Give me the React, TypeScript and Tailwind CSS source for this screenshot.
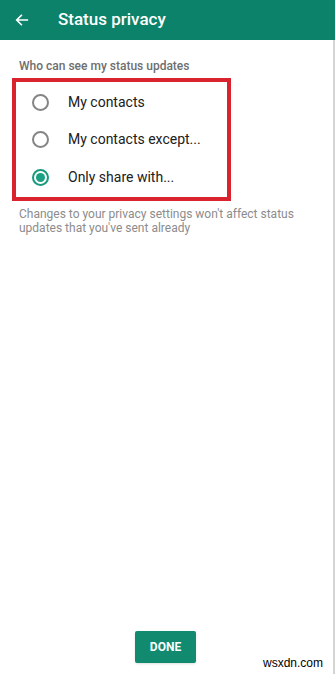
import React from "react";

const options = ["My contacts", "My contacts except...", "Only share with..."];

const Radio = ({ checked }: { checked: boolean }) => (
    <span
        className={`flex items-center justify-center w-[17px] h-[17px] rounded-full border-2 ${checked ? "border-[#179a7e]" : "border-[#858585]"}`}
    >
        {checked && <span className="w-[9px] h-[9px] rounded-full bg-[#1aa082]" />}
    </span>
);

export default function App() {
    return (
        <div className="flex flex-col w-[335px] h-[674px] bg-white font-['Roboto',sans-serif]">
            <div className="flex items-center h-[40px] bg-[#0b8269] shrink-0">
                <svg className="ml-[14px]" width="16" height="16" viewBox="0 0 24 24" fill="none" stroke="white" strokeWidth="2.4" strokeLinecap="square">
                    <path d="M20 12H5M11 5l-7 7 7 7" />
                </svg>
                <span className="ml-[28px] text-white text-[17px] font-medium">Status privacy</span>
            </div>
            <div className="relative flex-1 flex flex-col border-r-2 border-[#d4d4d4]">
                <div className="pl-[19px] pt-[17px] text-[12px] font-medium text-[#6e6e6e] leading-[18px]">
                    Who can see my status updates
                </div>
                <div className="ml-[12px] mt-[3px] w-[219px] h-[123px] border-[4px] border-[#d9232f] flex flex-col justify-center">
                    {options.map((o, i) => (
                        <div key={o} className="flex items-center h-[37.5px] pl-[16px]">
                            <Radio checked={i === 2} />
                            <span className="ml-[19px] text-[14px] text-[#202020]">{o}</span>
                        </div>
                    ))}
                </div>
                <p className="pl-[19px] pr-4 mt-[7px] text-[12px] leading-[13.5px] text-[#8c8c8c]">
                    Changes to your privacy settings won't affect status updates that you've sent already
                </p>
                <div className="flex-1" />
                <div className="flex justify-center pb-[11px] pr-[2px]">
                    <button className="w-[61px] h-[32px] rounded-[2px] bg-[#118a6f] text-white text-[12px] font-bold shadow-sm">
                        DONE
                    </button>
                </div>
                <span className="absolute right-[10px] bottom-[2px] text-[12px] text-black font-['Liberation_Sans',sans-serif]">wsxdn.com</span>
            </div>
        </div>
    );
}
